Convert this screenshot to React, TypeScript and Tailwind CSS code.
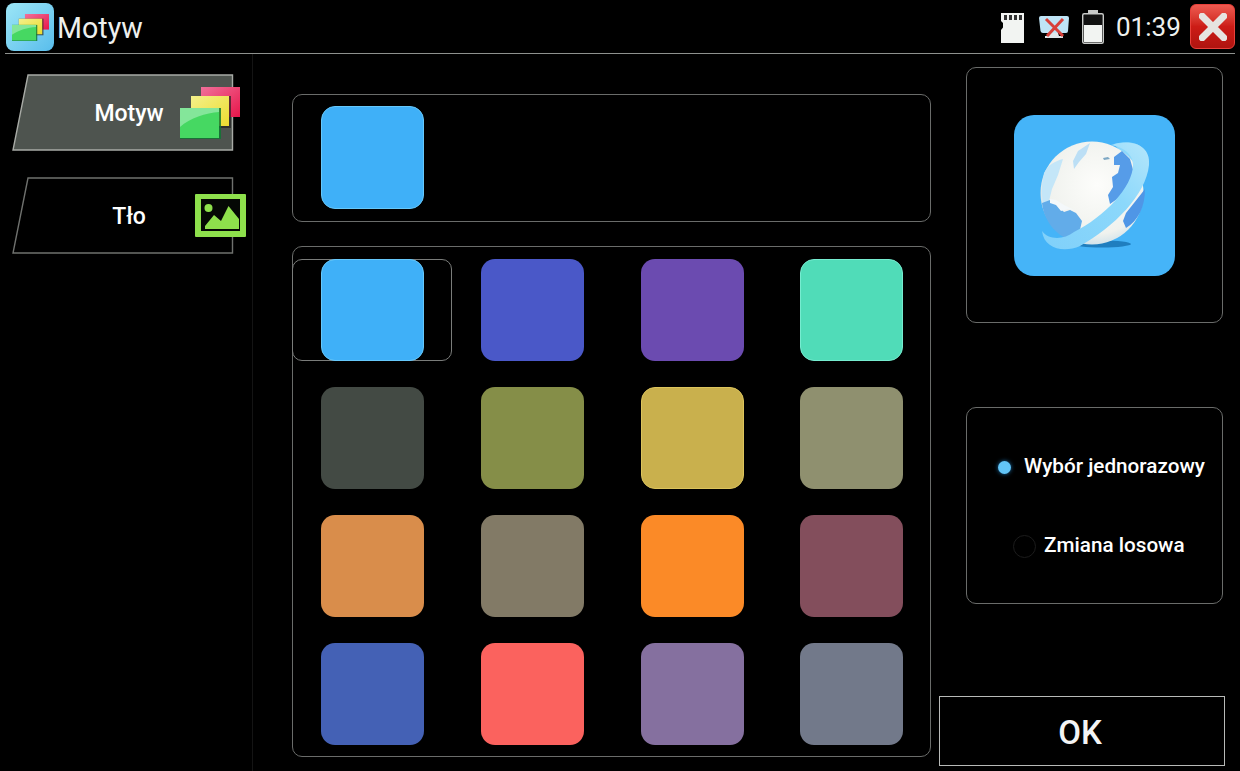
import React from "react";

const swatches = [
  "bg-[#3fb0f8] border border-[#66c8fb]", "bg-[#4a58c8]", "bg-[#6b4bb0]", "bg-[#50dcb8] border border-[#76ecd0]",
  "bg-[#434a44]", "bg-[#858e48]", "bg-[#c9b04d] border border-[#dcc45c]", "bg-[#8f906f]",
  "bg-[#d98d4b]", "bg-[#827a66]", "bg-[#fb8a27]", "bg-[#834e5c]",
  "bg-[#4461b5]", "bg-[#fb625e]", "bg-[#85709f]", "bg-[#72798a]",
];

function Sheets({ className, id }: { className: string; id: string }) {
  return (
    <svg viewBox="0 0 60 52" preserveAspectRatio="none" className={className}>
      <defs>
        <linearGradient id={id + "r"} x1="0" y1="0" x2="1" y2="1">
          <stop offset="0" stopColor="#f0709a" />
          <stop offset="1" stopColor="#e8164a" />
        </linearGradient>
        <linearGradient id={id + "y"} x1="0" y1="0" x2="1" y2="1">
          <stop offset="0" stopColor="#f4f08a" />
          <stop offset="1" stopColor="#ecdc30" />
        </linearGradient>
      </defs>
      <rect x="21" y="0" width="39" height="30" fill={`url(#${id}r)`} />
      <rect x="11" y="9" width="40" height="32" fill="#222" opacity="0.7" />
      <rect x="11" y="9" width="38" height="30" fill={`url(#${id}y)`} />
      <rect x="0" y="21" width="41" height="32" fill="#173" opacity="0.85" />
      <rect x="0" y="21" width="39" height="30" fill="#46d862" />
      <path d="M0 21 H39 V25 C26 26 10 31 0 40 Z" fill="#84e69a" />
    </svg>
  );
}

function ImageIcon() {
  return (
    <svg viewBox="0 0 51 43" className="absolute left-[183px] top-[17px] w-[51px] h-[43px]">
      <rect x="0" y="0" width="51" height="43" rx="1" fill="#8ee04c" />
      <rect x="6" y="5" width="39" height="32" fill="#050805" />
      <circle cx="13.5" cy="14" r="4" fill="#8ee04c" />
      <path d="M10 35 V32 L19 21 L26 27 L33.5 12 L44 25 V35 Z" fill="#8ee04c" />
    </svg>
  );
}

function Slanted({ active, label, children, id }: { active?: boolean; label: string; children: React.ReactNode; id: string }) {
  return (
    <div className="relative w-[222px] h-[77px] flex items-center justify-center pl-[12px] pt-[4px] text-white font-medium text-[23px]">
      <svg viewBox="0 0 222 77" className="absolute inset-0 w-[222px] h-[77px]" aria-hidden data-id={id}>
        <polygon
          points="16,1 220.5,1 220.5,76 1,76"
          fill={active ? "#4e544f" : "#000"}
          stroke={active ? "#a8aba6" : "#6f716e"}
          strokeWidth="1.4"
        />
      </svg>
      <span className="relative">{label}</span>
      {children}
    </div>
  );
}

function Globe() {
  return (
    <svg viewBox="0 0 161 161" className="w-[161px] h-[161px]">
      <defs>
        <radialGradient id="gl" cx="0.55" cy="0.42" r="0.66">
          <stop offset="0" stopColor="#fdfdfb" />
          <stop offset="0.72" stopColor="#f0f2ee" />
          <stop offset="1" stopColor="#bcd8e8" />
        </radialGradient>
        <linearGradient id="ring" x1="0" y1="1" x2="1" y2="0">
          <stop offset="0" stopColor="#80d0fa" />
          <stop offset="0.6" stopColor="#8cd8fb" />
          <stop offset="1" stopColor="#b4e6fb" />
        </linearGradient>
      </defs>
      <ellipse cx="88" cy="129" rx="29" ry="3.5" fill="#1570b0" opacity="0.8" />
      <path d="M100 29 C118 24 136 30 134 50 L120 52 Z" fill="#8cd8fb" />
      <circle cx="78" cy="78" r="51.5" fill="url(#gl)" />
      <path d="M30 58 C27 72 27 84 31 92 L35 86 L38 74 L44 60 L49 44 C41 46 34 50 30 58Z" fill="#c4e6f8" />
      <path d="M59 46 L64 36 L76 28 L72 39 L65 47 L60 54Z" fill="#bcdff5" />
      <path d="M28 88 C30 106 42 120 56 125 L65 119 L68 106 L62 98 L56 95 L50 97 L44 91 L36 85Z" fill="#62ace9" />
      <path d="M36 84 L42 85 L50 90 L60 95 L54 94 L47 96 L42 90 L36 88Z" fill="#f4f8fa" />
      <path d="M100 42 L108 36 L116 44 L120 58 L116 72 L106 82 L96 89 L94 80 L99 72 L98 62 L104 58 L106 50 L100 50Z" fill="#569ce8" />
      <path d="M112 98 L120 88 L131 74 C131 92 124 106 112 113 L109 106Z" fill="#4f96e6" />
      <path d="M89 43 L94 42 L96 44 L90 45Z" fill="#7ea8c4" />
      <path d="M97 30 C118 24 137 30 135 50 C132 80 100 112 66 131 C50 138 30 134 28 116 C34 125 50 125 60 117 C90 102 119 72 119 50 C119 38 108 32 97 30Z" fill="url(#ring)" />
    </svg>
  );
}

export default function App() {
  return (
    <div className="w-[1240px] h-[771px] bg-black flex flex-col overflow-hidden text-white font-['Roboto','Liberation_Sans',sans-serif]">
      <header className="h-[54px] mx-[5px] pl-[1px] flex items-center border-b border-[#8e918e]">
        <div className="relative w-[48px] h-[48px] rounded-[8px] bg-gradient-to-br from-[#9ce6f6] to-[#58bdec]">
          <Sheets id="h" className="absolute left-[6px] top-[11px] w-[37px] h-[27px]" />
        </div>
        <span className="ml-[3px] text-[28.6px] text-[#eef0ee] mt-[3px]">Motyw</span>
        <div className="ml-auto flex items-center">
          <svg viewBox="0 0 24 30" className="w-[24px] h-[30px] -ml-[1px] mt-[2px]">
            <path d="M1 0 H24 V30 H1 V17 L3 14.5 V10 L1 8 Z" fill="#f2f4f2" />
            <path d="M4 2h3v5H4zM9 2h3v5H9zM14 2h3v5h-3zM19 2h3v5h-3z" fill="#333" />
          </svg>
          <svg viewBox="0 0 30 23" className="ml-[15px] w-[30px] h-[23px] mt-[1px]">
            <path d="M2 0 H28 Q30 0 30 2 L29 15 Q29 17 27 17 H4 Q2 17 1.5 15 L0 2 Q0 0 2 0Z" fill="#bfe4f6" />
            <path d="M11 17h8l1 3h4v2H6v-2h4z" fill="#dfe6ea" />
            <path d="M7 3 L24 20 M24 3 L8 20" stroke="#d8403a" strokeWidth="3" />
          </svg>
          <svg viewBox="0 0 22 34" className="ml-[13px] w-[22px] h-[34px]">
            <rect x="6" y="0" width="10" height="3" fill="#c8cac8" />
            <rect x="0.7" y="3.7" width="20.6" height="29.6" rx="1.5" fill="#111" stroke="#c8cac8" strokeWidth="1.4" />
            <rect x="2" y="15" width="18" height="17" fill="#f2f4f2" />
          </svg>
          <span className="ml-[12px] mt-[2px] text-[26px] w-[64px] text-[#eef0ee]">01:39</span>
          <div className="ml-[10px] w-[45px] h-[45px] rounded-[6px] flex items-center justify-center bg-gradient-to-b from-[#ee5a50] via-[#cc1c16] to-[#b01410] border border-[#e8403a]">
            <svg viewBox="0 0 26 26" className="w-[28px] h-[28px]">
              <path d="M3 3 L23 23 M23 3 L3 23" stroke="#e6e4e0" strokeWidth="6.5" strokeLinecap="round" />
            </svg>
          </div>
        </div>
      </header>

      <div className="flex flex-1">
        <aside className="w-[253px] border-r border-[#141414] pl-[12px] pt-[20px] flex flex-col gap-[26px]">
          <Slanted active label="Motyw" id="a">
            <Sheets id="s" className="absolute left-[168px] top-[13px] w-[60px] h-[52px]" />
          </Slanted>
          <Slanted label="Tło" id="b">
            <ImageIcon />
          </Slanted>
        </aside>

        <main className="w-[686px] pl-[39px] pt-[40px]">
          <div className="w-[639px] h-[128px] border border-[#6a6c6a] rounded-[10px] pl-[28px] pt-[11px]">
            <div className="w-[103px] h-[103px] rounded-[14px] bg-[#3fb0f8] border border-[#66c8fb]" />
          </div>
          <div className="mt-[24px] w-[639px] h-[511px] border border-[#6a6c6a] rounded-[10px] pt-[12px] grid grid-cols-[160px_160px_159px_160px] auto-rows-[102px] gap-y-[26px] content-start">
            {swatches.map((c, i) => (
              <div key={c} className="relative pl-[28px]">
                {i === 0 && (
                  <div className="absolute left-[-1px] top-0 w-[160px] h-[102px] border border-[#7a7c7a] rounded-[10px]" />
                )}
                <div className={`relative w-[103px] h-[102px] rounded-[14px] ${c}`} />
              </div>
            ))}
          </div>
        </main>

        <aside className="flex-1 pt-[13px]">
          <div className="ml-[27px] w-[257px] h-[256px] border border-[#6a6c6a] rounded-[10px] flex items-center justify-center">
            <div className="w-[161px] h-[161px] rounded-[20px] bg-[#45b4f8]">
              <Globe />
            </div>
          </div>
          <div className="ml-[27px] mt-[84px] w-[257px] h-[197px] border border-[#6a6c6a] rounded-[10px] pt-[46px] text-[20.7px] font-medium">
            <div className="h-[26px] flex items-center pl-[31px]">
              <span className="w-[13px] h-[13px] rounded-full bg-[#62c4f6] shadow-[0_0_4px_#1d6fa8]" />
              <span className="ml-[13px]">Wybór jednorazowy</span>
            </div>
            <div className="mt-[53px] h-[26px] flex items-center pl-[46px]">
              <span className="w-[23px] h-[23px] rounded-full border border-[#1c1c1c]" />
              <span className="ml-[8px]">Zmiana losowa</span>
            </div>
          </div>
          <div className="mt-[92px] w-[286px] h-[70px] border border-[#b8bab8] flex items-center justify-center pt-[3px] pr-[4px] text-[33px] font-medium text-[#f4f4f4]">
            OK
          </div>
        </aside>
      </div>
    </div>
  );
}
